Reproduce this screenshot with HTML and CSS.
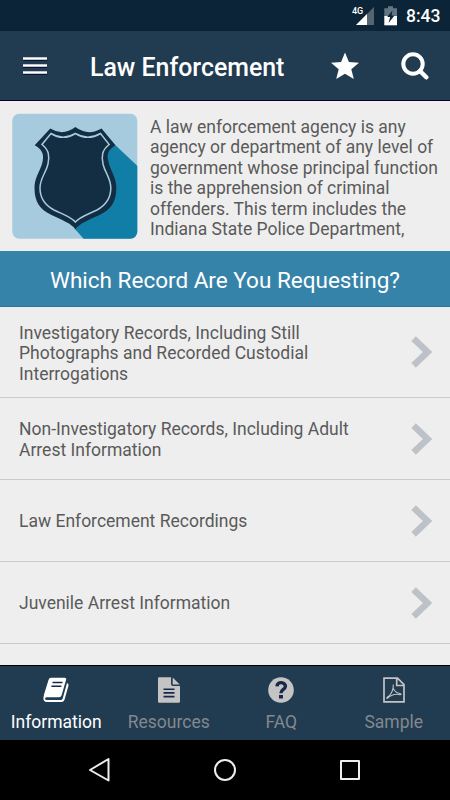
FILE: index.html
```html
<!DOCTYPE html>
<html lang="en">
<head>
<meta charset="utf-8">
<title>Law Enforcement</title>
<link rel="stylesheet" href="styles.css">
</head>
<body>
<div class="status">
  <svg class="signal" width="23" height="20" viewBox="0 0 23 20"><path d="M22 1v18H4z" fill="#536572"/><path d="M15 8v11H4z" fill="#fff"/></svg>
  <span class="net">4G</span>
  <svg class="battery" width="14" height="20" viewBox="0 0 14 20"><path d="M4 .3h5v2h4v8H.3V2.300H4z" fill="#637582"/><path d="M.3 10h12.700v9.300H.3z" fill="#fff"/><path d="M8.500 4.500 3.200 11h3L4.500 17 10.500 9.500H7.500z" fill="#0c2437"/></svg>
  <span class="time">8:43</span>
</div>
<header class="bar">
  <svg class="menu" width="24" height="18" viewBox="0 0 24 18"><path d="M0 2h24M0 9h24M0 16h24" stroke="#080735" stroke-width="3.6"/><path d="M0 1.4h24M0 8.4h24M0 15.4h24" stroke="#fff" stroke-width="2.5"/></svg>
  <h1>Law Enforcement</h1>
  <svg class="star" width="28" height="28" viewBox="0 0 28 28"><path d="m14 .5 3.900 9.500 10.100.8-7.700 6.500 2.500 9.700-8.800-5.200L5.200 27l2.500-9.700L0 10.800l10.100-.8z" fill="#fff"/></svg>
  <svg class="search" width="28" height="28" viewBox="0 0 28 28" fill="none" stroke="#fff"><circle cx="12" cy="12" r="9.700" stroke-width="4"/><path d="m19 19 6.300 6.300" stroke-width="4.400" stroke-linecap="round"/></svg>
</header>
<section class="intro">
  <svg class="badge" width="126" height="126" viewBox="12 113 126 126">
    <defs><clipPath id="tile"><rect x="12.300" y="113.700" width="125" height="125" rx="7"/></clipPath></defs>
    <g clip-path="url(#tile)">
      <path d="M12 113h126v126H12z" fill="#a6cbde"/>
      <path d="M115.500 145.300l24 22.500V241H85.500L75 229 100 150z" fill="#117ea8"/>
      <path d="M50.300 128.500Q63 136.500 75.400 127Q88 136.500 101.500 128.500L115.500 145.300C108 150 106.500 154 108.500 162C110.500 171 116.300 177 116.300 188C116.300 202 111 209.500 99.500 215C88.500 220 79 223.500 75.400 229.500C71.800 223.500 62 220 51.500 215C40 209.500 34.500 202 34.500 188C34.500 177 40.500 171 42.500 162C44.300 154 42 149.500 34.700 145.300Z" fill="#132d43"/>
      <path d="M51 133.500Q63 141 75.400 133.500Q88 141 100.500 133.500L109.200 144.500C102 150 101.300 156 103 164C105 173 110.800 178 110.800 188C110.800 198.500 106 205 97 210C87.500 214.500 79.500 217 75.400 222C71.300 217 63.500 214.500 54 210C44.500 205 40 198.500 40 188C40 178 46 173 48 164C49.700 156 49 150 42 144.500Z" fill="none" stroke="#a6cbde" stroke-width="1.500"/>
    </g>
  </svg>
  <p>A law enforcement agency is any<br>agency or department of any level of<br>government whose principal function<br>is the apprehension of criminal<br>offenders. This term includes the<br>Indiana State Police Department,</p>
</section>
<h2>Which Record Are You Requesting?</h2>
<main>
  <div class="row first"><span>Investigatory Records, Including Still<br>Photographs and Recorded Custodial<br>Interrogations</span><svg width="21" height="32" viewBox="0 0 21 32"><path d="M2.600 2.600 16.500 16 2.600 29.400" /></svg></div>
  <div class="row"><span>Non-Investigatory Records, Including Adult<br>Arrest Information</span><svg width="21" height="32" viewBox="0 0 21 32"><path d="M2.600 2.600 16.500 16 2.600 29.400" /></svg></div>
  <div class="row"><span>Law Enforcement Recordings</span><svg width="21" height="32" viewBox="0 0 21 32"><path d="M2.600 2.600 16.500 16 2.600 29.400" /></svg></div>
  <div class="row"><span>Juvenile Arrest Information</span><svg width="21" height="32" viewBox="0 0 21 32"><path d="M2.600 2.600 16.500 16 2.600 29.400" /></svg></div>
</main>
<nav class="tabs">
  <div class="tab active">
    <svg width="26" height="26" viewBox="0 0 26 26"><path d="M8 .7h13.500q2.200 0 1.600 2L18.600 18.200q-.6 2-2.500 2H4q-1.800 0-2 1.300Q2 23 4 23h13.700q1.500 0 2-1.500l4.300-15.500q2 .6 1.500 2.500L21.500 22.700Q20.800 25 18.300 25H4Q.3 25 .4 21L1 17.500 5.600 2.700q.6-2 2.400-2z" fill="#fff"/><path d="M9.500 5.500h10M8.400 9.200h10" stroke="#17294a" stroke-width="1.500"/></svg>
    <span>Information</span>
  </div>
  <div class="tab">
    <svg width="26" height="26" viewBox="0 0 26 26"><path d="M2 1.500Q2 .3 3.200.3H15V7q0 2 2 2h7v15.500q0 1.300-1.300 1.300H3.200Q2 25.800 2 24.500z" fill="#c4c4c4"/><path d="M16.700.5 23.700 7.500H16.700z" fill="#c4c4c4"/><path d="M7.500 12.200h11M7.500 15.900h11M7.500 19.600h11" stroke="#17294a" stroke-width="1.600"/></svg>
    <span>Resources</span>
  </div>
  <div class="tab">
    <svg width="26" height="26" viewBox="0 0 26 26"><circle cx="13" cy="13" r="12.800" fill="#c4c4c4"/><path d="M8.900 9.300C9.400 3.800 17.600 5 17.400 9.500C17.200 12.500 12.900 12.400 12.900 16.200" fill="none" stroke="#17294a" stroke-width="3.400"/><path d="M11 18h4v3.500h-4z" fill="#17294a"/></svg>
    <span>FAQ</span>
  </div>
  <div class="tab">
    <svg width="26" height="26" viewBox="0 0 26 26" fill="none" stroke="#c4c4c4" stroke-width="1.700"><path d="M3 1.200h13.500L23 7.700v17.100H3zM15.700 1.500v7H23"/><path d="M12.300 7.500c-1 4.500 1.500 8.500 7.200 9.300 1 .3.800 1-.5 1-4.500-1.300-8-.5-12.300 3.300-1.200.8-1.200-.3-.3-1C10.300 18 12.700 12 12.300 7.500z" stroke-width="1.100"/></svg>
    <span>Sample</span>
  </div>
</nav>
<footer class="system">
  <svg width="24" height="26" viewBox="0 0 24 26"><path d="M20.500 2v21.500L2 13z"/></svg>
  <svg width="24" height="26" viewBox="0 0 24 26"><circle cx="12" cy="13" r="10"/></svg>
  <svg width="24" height="26" viewBox="0 0 24 26"><path d="M3 4h18v18H3z"/></svg>
</footer>
</body>
</html>
```
FILE: styles.css
```css
* { box-sizing: border-box; }
body { margin: 0; width: 450px; height: 800px; overflow: hidden; background: #eee; color: #5a5a5a; font-family: Roboto, "Liberation Sans", sans-serif; display: flex; flex-direction: column; }
svg { display: block; flex: none; }
h1, h2, p { margin: 0; font-weight: 400; white-space: nowrap; }
.status { position: relative; height: 31px; flex: none; background: #0c2437; color: #fff; display: flex; align-items: center; justify-content: flex-end; padding-right: 9px; }
.signal { margin-right: 9px; }
.net { position: absolute; left: 352px; top: 5px; font-size: 9px; line-height: 12px; font-weight: 500; }
.battery { margin-right: 8px; }
.time { width: 35px; font-size: 17.5px; line-height: 31px; font-weight: 500; white-space: nowrap; padding-top: 2px; }
.bar { height: 70px; flex: none; background: #213b50; border-bottom: 1px solid #050032; display: flex; align-items: center; padding: 1px 0 0 23px; color: #fff; }
.bar h1 { width: 195px; margin-left: 43px; padding-top: 3px; font-size: 24.9px; line-height: 30px; font-weight: 500; }
.star { margin-left: 46px; }
.search { margin-left: 42px; }
.intro { height: 150px; flex: none; display: flex; padding: 12px 0 0 12px; }
.intro p { margin: 4px 0 0 12px; font-size: 17.5px; line-height: 20.4px; }
h2 { height: 56px; flex: none; background: #3683aa; border-bottom: 1px solid #2878a2; color: #fff; font-size: 22.5px; line-height: 59px; text-align: center; }
main { flex: 1; min-height: 0; }
.row { height: 82px; border-bottom: 1px solid #c9cacb; display: flex; align-items: center; justify-content: space-between; padding: 0 18px 0 19px; font-size: 17.5px; line-height: 20.4px; white-space: nowrap; }
.row span { padding-top: 2px; }
.row svg { fill: none; stroke: #bcc2c7; stroke-width: 6.500; }
.first { height: 91px; }
.first span { padding-top: 3px; }
.tabs { height: 75px; flex: none; background: #213b50; border-top: 1px solid #000; display: grid; grid-template-columns: repeat(4, 1fr); color: #83898e; }
.tab { display: flex; flex-direction: column; align-items: center; padding-top: 11px; font-size: 17.5px; line-height: 22px; gap: 8px; }
.active { color: #fff; }
.system { height: 60px; flex: none; background: #000; display: flex; justify-content: center; align-items: center; gap: 101px; }
.system svg { fill: none; stroke: #eee; stroke-width: 2; stroke-linejoin: round; }
```
